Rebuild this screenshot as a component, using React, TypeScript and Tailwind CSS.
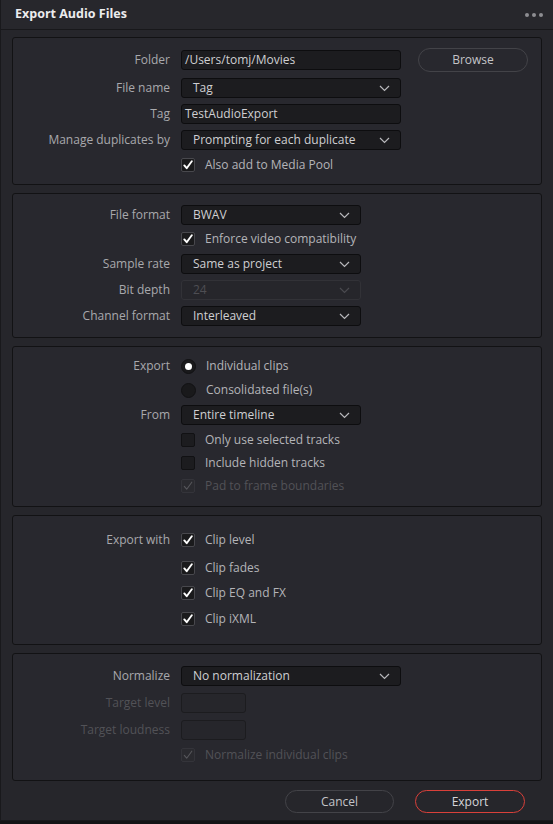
import { ReactNode } from 'react'

function Chevron({ dim }: { dim?: boolean }) {
  return (
    <svg
      width="11"
      height="7"
      viewBox="0 0 11 7"
      fill="none"
      className={dim ? 'text-[#4a4a4f]' : 'text-[#b8b8bc]'}
    >
      <path d="M1 1l4.5 4.5L10 1" stroke="currentColor" strokeWidth="1.2" />
    </svg>
  )
}

function Check({ dim }: { dim?: boolean }) {
  return (
    <svg width="10" height="10" viewBox="0 0 10 10" fill="none">
      <path
        d="M1.3 5.4l2.4 2.8L8.8 1.2"
        stroke={dim ? '#56565b' : '#ffffff'}
        strokeWidth={dim ? 1.1 : 1.9}
        strokeLinecap="round"
        strokeLinejoin="round"
      />
    </svg>
  )
}

function Label({ children, dim }: { children?: ReactNode; dim?: boolean }) {
  return (
    <div
      className={`w-[168px] shrink-0 pr-[11px] text-right ${
        dim ? 'text-[#525257]' : 'text-[#a9a9ad]'
      }`}
    >
      {children}
    </div>
  )
}

function Row({
  label,
  dim,
  className = '',
  children,
}: {
  label?: string
  dim?: boolean
  className?: string
  children: ReactNode
}) {
  return (
    <div className={`flex items-center ${className}`}>
      <Label dim={dim}>{label}</Label>
      {children}
    </div>
  )
}

function Select({
  value,
  w,
  dim,
}: {
  value: string
  w: string
  dim?: boolean
}) {
  return (
    <div
      className={`${w} h-[20px] flex items-center justify-between pl-[11px] pr-[10px] rounded-[3px] border ${
        dim
          ? 'border-[#323237] bg-[#26262b] text-[#4e4e53]'
          : 'border-[#0d0d0f] bg-[#1c1c1f] text-[#cfcfd2]'
      }`}
    >
      <span>{value}</span>
      <Chevron dim={dim} />
    </div>
  )
}

function TextInput({ value, w, dim }: { value?: string; w: string; dim?: boolean }) {
  return (
    <div
      className={`${w} h-[20px] flex items-center px-[3px] rounded-[3px] border ${
        dim
          ? 'border-[#1c1c1f] bg-[#26262b]'
          : 'border-[#0d0d0f] bg-[#1c1c1f] text-[#cfcfd2]'
      }`}
    >
      {value}
    </div>
  )
}

function Checkbox({
  label,
  checked,
  dim,
}: {
  label: string
  checked?: boolean
  dim?: boolean
}) {
  return (
    <div className="flex items-center h-[18px]">
      <div
        className={`w-[14px] h-[14px] rounded-[2px] border flex items-center justify-center ${
          dim
            ? 'border-[#34343a] bg-[#2a2a2f]'
            : checked
              ? 'border-[#48484d] bg-[#1a1a1c]'
              : 'border-[#111113] bg-[#1c1c1f]'
        }`}
      >
        {checked && <Check dim={dim} />}
      </div>
      <span className={`ml-[10px] ${dim ? 'text-[#525257]' : 'text-[#b4b4b8]'}`}>
        {label}
      </span>
    </div>
  )
}

function Radio({ label, on }: { label: string; on?: boolean }) {
  return (
    <div className="flex items-center h-[18px]">
      <div className="w-[15px] h-[15px] rounded-full bg-[#19191b] border border-[#111113] flex items-center justify-center">
        {on && <div className="w-[7px] h-[7px] rounded-full bg-white" />}
      </div>
      <span className="ml-[10px] text-[#b4b4b8]">{label}</span>
    </div>
  )
}

function Panel({ className = '', children }: { className?: string; children: ReactNode }) {
  return (
    <div
      className={`mx-[11px] rounded-[3px] border border-[#121214] bg-[#28282e] flex flex-col ${className}`}
    >
      {children}
    </div>
  )
}

export default function App() {
  return (
    <div className="w-[553px] h-[824px] bg-[#141416] font-['Open_Sans',sans-serif] text-[12px] leading-none overflow-hidden">
      <div className="h-[821px] bg-[#26262b] border-l border-b border-[#19191c] flex flex-col">
        {/* title */}
        <div className="h-[30px] shrink-0 flex items-center justify-between pl-[14px] pr-[10px] border-b border-[#18181b] bg-[#27272c]">
          <span className="text-[12.5px] font-bold text-[#ececee]">Export Audio Files</span>
          <div className="flex gap-[3px]">
            <span className="w-[4px] h-[4px] rounded-full bg-[#8d8d92]" />
            <span className="w-[4px] h-[4px] rounded-full bg-[#8d8d92]" />
            <span className="w-[4px] h-[4px] rounded-full bg-[#8d8d92]" />
          </div>
        </div>

        <div className="flex flex-col gap-[8px] pt-[7px]">
          <Panel className="pt-[10px] pb-[10px]">
            <Row label="Folder" className="h-[24px]">
              <TextInput value="/Users/tomj/Movies" w="w-[220px]" />
              <button className="ml-[17px] w-[110px] h-[24px] rounded-full border border-[#434348] text-[#c4c4c8]">
                Browse
              </button>
            </Row>
            <Row label="File name" className="mt-[6px]">
              <Select value="Tag" w="w-[220px]" />
            </Row>
            <Row label="Tag" className="mt-[6px]">
              <TextInput value="TestAudioExport" w="w-[220px]" />
            </Row>
            <Row label="Manage duplicates by" className="mt-[6px]">
              <Select value="Prompting for each duplicate" w="w-[220px]" />
            </Row>
            <Row className="mt-[6px]">
              <Checkbox label="Also add to Media Pool" checked />
            </Row>
          </Panel>

          <Panel className="pt-[11px] pb-[11px]">
            <Row label="File format">
              <Select value="BWAV" w="w-[180px]" />
            </Row>
            <Row className="mt-[5px]">
              <Checkbox label="Enforce video compatibility" checked />
            </Row>
            <Row label="Sample rate" className="mt-[6px]">
              <Select value="Same as project" w="w-[180px]" />
            </Row>
            <Row label="Bit depth" className="mt-[6px]">
              <Select value="24" w="w-[180px]" dim />
            </Row>
            <Row label="Channel format" className="mt-[6px]">
              <Select value="Interleaved" w="w-[180px]" />
            </Row>
          </Panel>

          <Panel className="pt-[10px] pb-[11px]">
            <Row label="Export">
              <Radio label="Individual clips" on />
            </Row>
            <Row className="mt-[6px]">
              <Radio label="Consolidated file(s)" />
            </Row>
            <Row label="From" className="mt-[6px]">
              <Select value="Entire timeline" w="w-[180px]" />
            </Row>
            <Row className="mt-[6px]">
              <Checkbox label="Only use selected tracks" />
            </Row>
            <Row className="mt-[5px]">
              <Checkbox label="Include hidden tracks" />
            </Row>
            <Row className="mt-[5px]">
              <Checkbox label="Pad to frame boundaries" checked dim />
            </Row>
          </Panel>

          <Panel className="pt-[15px] pb-[16px]">
            <Row label="Export with">
              <Checkbox label="Clip level" checked />
            </Row>
            <Row className="mt-[10px]">
              <Checkbox label="Clip fades" checked />
            </Row>
            <Row className="mt-[7px]">
              <Checkbox label="Clip EQ and FX" checked />
            </Row>
            <Row className="mt-[8px]">
              <Checkbox label="Clip iXML" checked />
            </Row>
          </Panel>

          <Panel className="pt-[12px] pb-[16px]">
            <Row label="Normalize">
              <Select value="No normalization" w="w-[220px]" />
            </Row>
            <Row label="Target level" dim className="mt-[7px]">
              <TextInput w="w-[65px]" dim />
            </Row>
            <Row label="Target loudness" dim className="mt-[7px]">
              <TextInput w="w-[65px]" dim />
            </Row>
            <Row className="mt-[6px]">
              <Checkbox label="Normalize individual clips" checked dim />
            </Row>
          </Panel>
        </div>

        <div className="flex justify-end gap-[21px] pr-[28px] pt-[9px]">
          <button className="w-[109px] h-[23px] rounded-full border border-[#434348] text-[#c4c4c8]">
            Cancel
          </button>
          <button className="w-[110px] h-[23px] rounded-full border border-[#d9403a] text-[#d6d6da]">
            Export
          </button>
        </div>
      </div>
    </div>
  )
}
